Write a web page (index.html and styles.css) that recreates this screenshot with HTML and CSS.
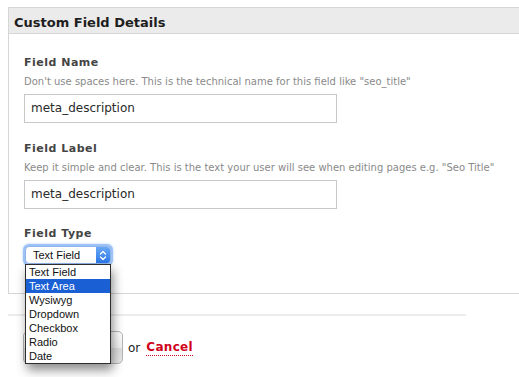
FILE: index.html
```html
<!DOCTYPE html>
<html>
<head>
<meta charset="utf-8">
<link rel="stylesheet" href="styles.css">
</head>
<body>
<div class="panel">
  <div class="panel-head">Custom Field Details</div>
  <div class="panel-body">
    <div class="field">
      <div class="label">Field Name</div>
      <div class="help">Don't use spaces here. This is the technical name for this field like "seo_title"</div>
      <div class="input">meta_description</div>
    </div>
    <div class="field field-2">
      <div class="label">Field Label</div>
      <div class="help">Keep it simple and clear. This is the text your user will see when editing pages e.g. "Seo Title"</div>
      <div class="input">meta_description</div>
    </div>
    <div class="field field-3">
      <div class="label">Field Type</div>
      <div class="select-wrap">
        <div class="select">
          <span class="select-text">Text Field</span>
          <span class="select-arrow">
            <svg width="8" height="11" viewBox="0 0 8 11"><path d="M1.5 4 L4 1.5 L6.5 4 M1.5 7 L4 9.5 L6.5 7" fill="none" stroke="#fff" stroke-width="1.3" stroke-linecap="round" stroke-linejoin="round"/></svg>
          </span>
        </div>
        <ul class="menu">
          <li>Text Field</li>
          <li class="active">Text Area</li>
          <li>Wysiwyg</li>
          <li>Dropdown</li>
          <li>Checkbox</li>
          <li>Radio</li>
          <li>Date</li>
        </ul>
      </div>
    </div>
  </div>
</div>
<div class="actions">
  <span class="button">Save</span>
  <span class="or">or</span>
  <span class="cancel">Cancel</span>
</div>
</body>
</html>
```
FILE: styles.css
```css
html, body {
  margin: 0;
  padding: 0;
  background: #fff;
  overflow: hidden;
}
body {
  padding: 7px 0 0 8px;
  font-family: "DejaVu Sans", Verdana, sans-serif;
  width: 519px;
  height: 377px;
  box-sizing: border-box;
}
.panel {
  border: 1px solid #d6d6d6;
  width: 530px;
}
.panel-head {
  height: 26px;
  box-sizing: border-box;
  padding: 3px 0 0 5px;
  line-height: 23px;
  background: #ebebeb;
  border-bottom: 1px solid #d6d6d6;
  font-size: 13px;
  font-weight: bold;
  color: #1e1e1e;
}
.panel-body {
  padding: 22px 15px 29px;
}
.field-2 {
  margin-top: 19px;
}
.field-3 {
  margin-top: 18px;
}
.label {
  font-size: 11px;
  line-height: 14px;
  font-weight: bold;
  letter-spacing: 0.5px;
  color: #444;
}
.help {
  margin-top: 6px;
  font-size: 10px;
  line-height: 12px;
  color: #8a8a8a;
  white-space: nowrap;
}
.input {
  margin-top: 6px;
  width: 313px;
  height: 29px;
  box-sizing: border-box;
  border: 1px solid #c8c8c8;
  padding: 0 6px 2px;
  font-size: 12px;
  line-height: 26px;
  color: #2a2a2a;
}
.select-wrap {
  position: relative;
  margin-top: 5px;
  width: 86px;
  margin-left: 1px;
}
.select {
  display: flex;
  align-items: center;
  height: 18px;
  box-sizing: border-box;
  border: 1px solid #8fb3ea;
  border-radius: 4px;
  background: #fff;
  box-shadow: 0 0 0 2px #9cc1f5, 0 0 3px 2px #b6d2f8;
  font-family: "Liberation Sans", Arial, sans-serif;
  font-size: 11px;
  color: #111;
}
.select-text {
  flex: 1;
  padding-left: 7px;
  line-height: 16px;
}
.select-arrow {
  width: 14px;
  height: 16px;
  display: flex;
  align-items: center;
  justify-content: center;
  background: linear-gradient(#6aa8f5, #2a78ea);
  border-radius: 0 3px 3px 0;
}
.select-arrow svg {
  display: block;
}
.menu {
  position: absolute;
  left: 0;
  top: 18px;
  margin: 0;
  padding: 0;
  list-style: none;
  width: 86px;
  box-sizing: border-box;
  border: 1px solid #2d2d2d;
  background: #fff;
  box-shadow: 2px 6px 10px rgba(0, 0, 0, 0.45);
  font-family: "Liberation Sans", Arial, sans-serif;
  font-size: 11px;
  color: #111;
  z-index: 5;
}
.menu li {
  height: 14px;
  line-height: 14px;
  padding-left: 3px;
}
.menu li.active {
  background: #1a5fd4;
  color: #fff;
}
.actions {
  margin-top: 20px;
  width: 458px;
  box-sizing: border-box;
  border-top: 2px solid #ececec;
  padding: 15px 0 0 15px;
  display: flex;
  align-items: center;
}
.button {
  width: 100px;
  height: 33px;
  box-sizing: border-box;
  border: 1px solid #b5b5b5;
  border-radius: 5px;
  background: linear-gradient(#ffffff, #f2f2f2 50%, #dedede 51%, #e9e9e9);
  font-size: 12px;
  line-height: 31px;
  text-align: center;
  color: #333;
}
.or {
  margin-left: 5px;
  font-size: 12px;
  color: #222;
}
.cancel {
  margin-left: 6px;
  font-size: 12px;
  font-weight: bold;
  letter-spacing: 0.3px;
  color: #d0021b;
  border-bottom: 1px dotted #d0021b;
  line-height: 14px;
  padding-bottom: 1px;
}
```
